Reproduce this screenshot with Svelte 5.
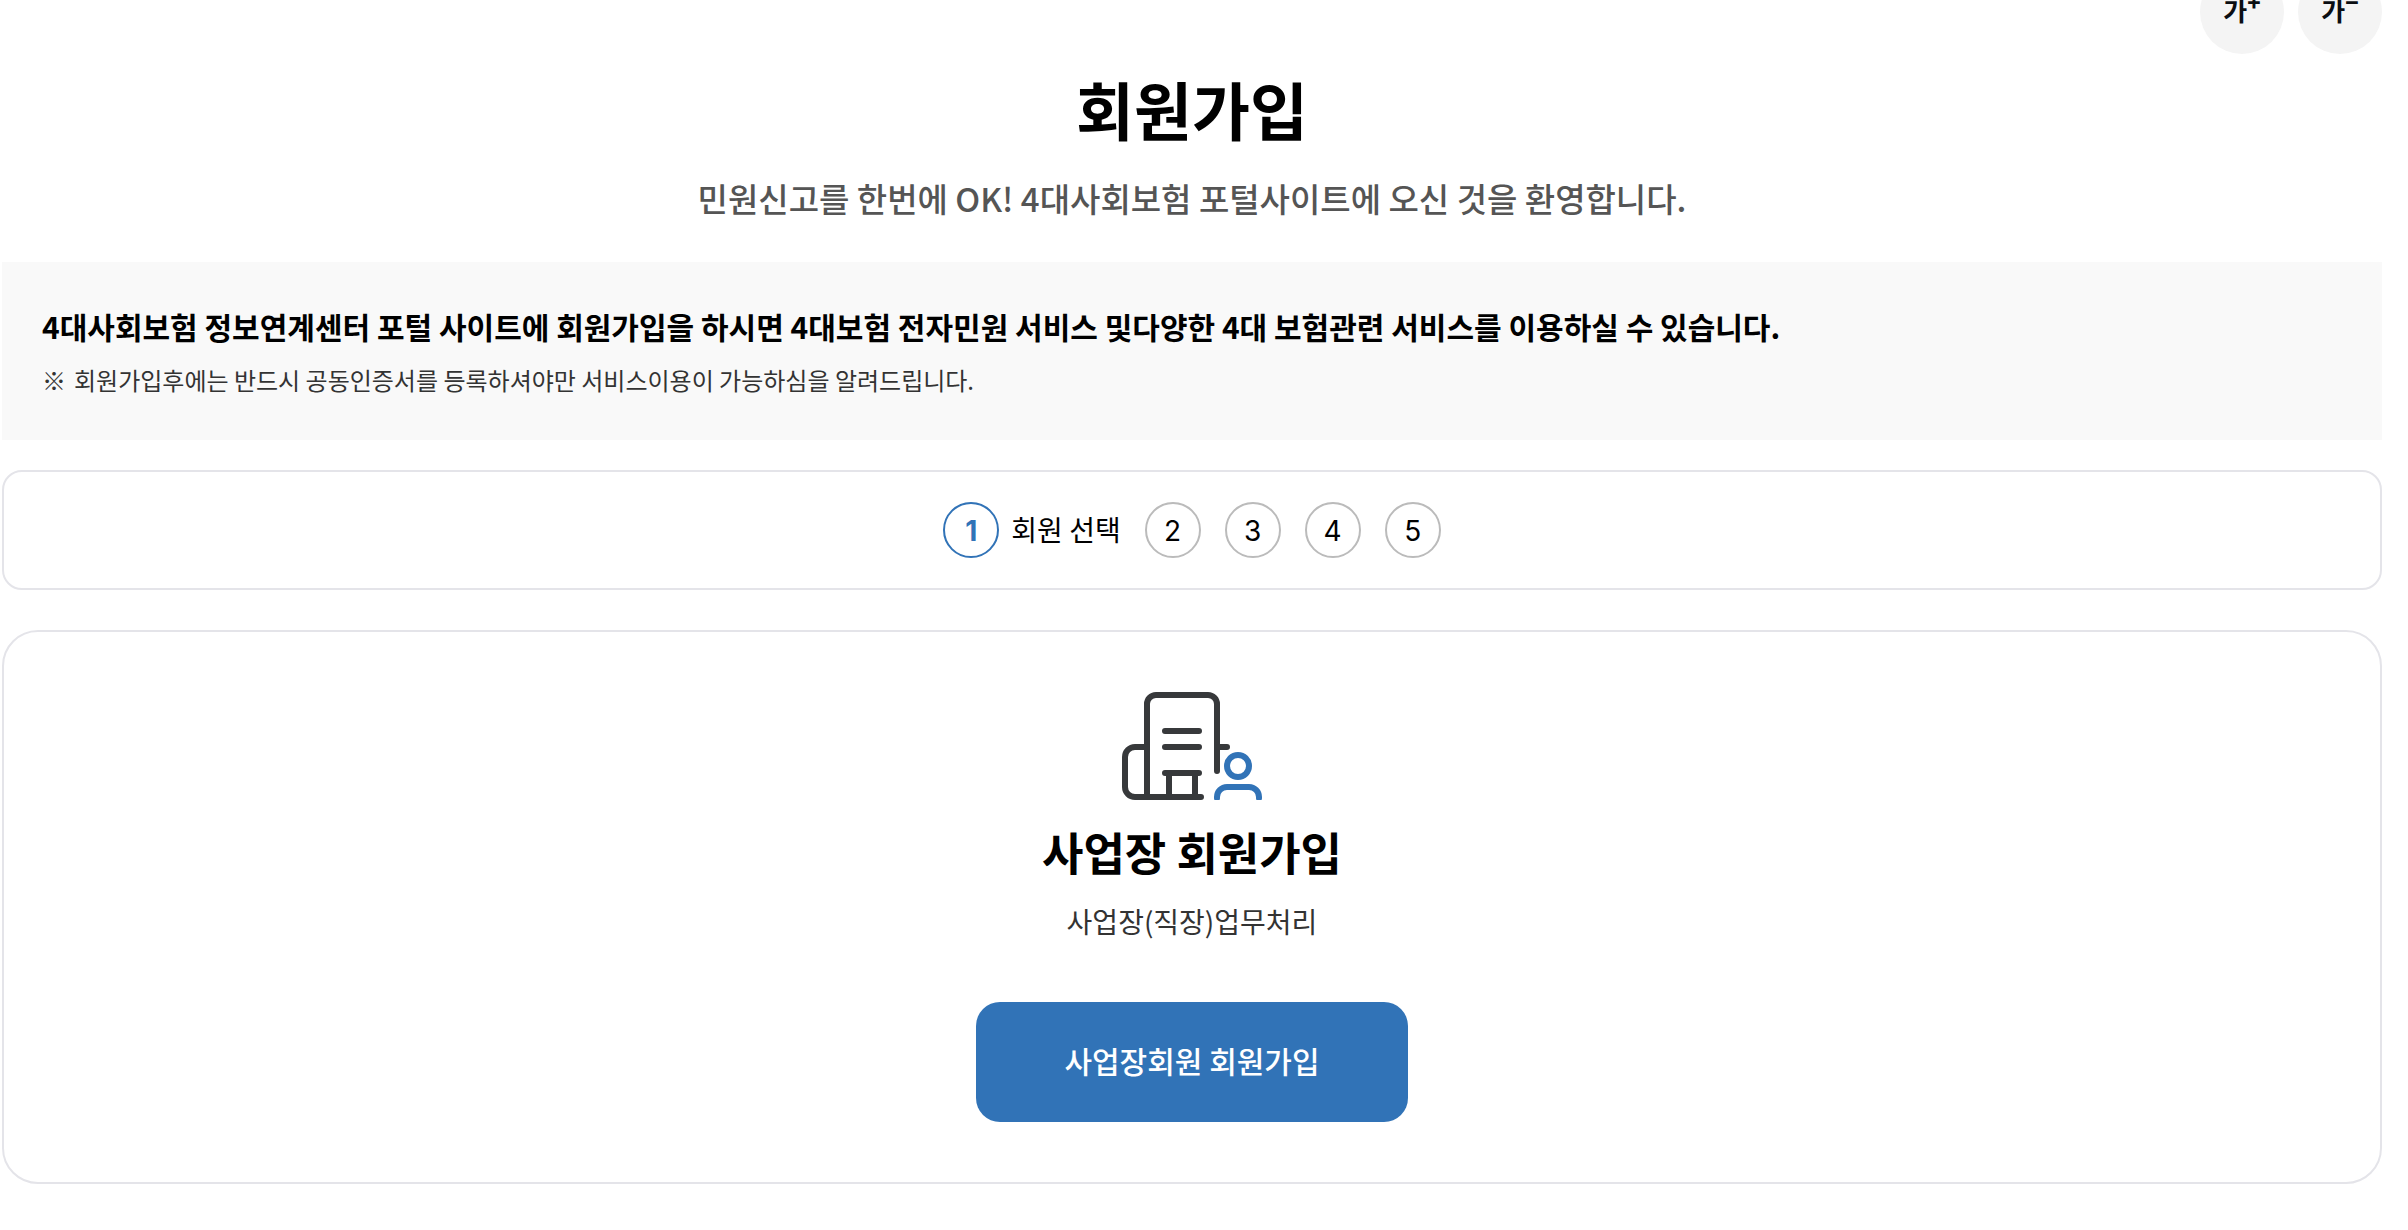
<script>
  const steps = [
    { number: 1, label: '회원 선택' },
    { number: 2 },
    { number: 3 },
    { number: 4 },
    { number: 5 }
  ];
</script>

<main class="page">
  <div class="tools">
    <button type="button" class="zoom" aria-label="글자 크게">가<sup>+</sup></button>
    <button type="button" class="zoom" aria-label="글자 작게">가<sup>−</sup></button>
  </div>

  <header class="heading">
    <h1>회원가입</h1>
    <p>민원신고를 한번에 OK! 4대사회보험 포털사이트에 오신 것을 환영합니다.</p>
  </header>

  <section class="notice">
    <strong>4대사회보험 정보연계센터 포털 사이트에 회원가입을 하시면 4대보험 전자민원 서비스 및다양한 4대 보험관련 서비스를 이용하실 수 있습니다.</strong>
    <p><span class="mark">※</span>회원가입후에는 반드시 공동인증서를 등록하셔야만 서비스이용이 가능하심을 알려드립니다.</p>
  </section>

  <ol class="steps">
    {#each steps as step}
      <li class:current={step.label}>
        <span class="number">{step.number}</span>
        {#if step.label}<span class="label">{step.label}</span>{/if}
      </li>
    {/each}
  </ol>

  <section class="card">
    <svg class="icon" viewBox="0 0 140 108" fill="none" stroke-width="6" stroke-linecap="round" aria-hidden="true">
      <g stroke="#37393b">
        <path d="M25 105V12a9 9 0 0 1 9-9h52a9 9 0 0 1 9 9v67" />
        <path d="M25 55H13a10 10 0 0 0-10 10v30a10 10 0 0 0 10 10h66" />
        <path d="M43 39h34M43 55h34M43 81h34M47 83v22M73 83v22M97 55h8" />
      </g>
      <g stroke="#3173b7">
        <circle cx="116" cy="74" r="11" />
        <path d="M95 106v-1a10 10 0 0 1 10-10h22a10 10 0 0 1 10 10v1" />
      </g>
    </svg>
    <h2>사업장 회원가입</h2>
    <p>사업장(직장)업무처리</p>
    <button type="button" class="join">사업장회원 회원가입</button>
  </section>
</main>

<style>
  :global(body) {
    margin: 0;
    background: #fff;
  }

  .page {
    padding: 0 26px 46px 2px;
    overflow: hidden;
    color: #000;
    font-family: 'Noto Sans CJK KR', sans-serif;
  }

  h1,
  h2,
  p,
  ol {
    margin: 0;
  }

  button {
    border: 0;
    font-family: inherit;
    cursor: pointer;
  }

  .tools {
    display: flex;
    justify-content: flex-end;
    gap: 14px;
    margin-top: -30px;
  }

  .zoom {
    width: 84px;
    height: 84px;
    padding: 0 0 4px;
    border-radius: 50%;
    background: #f4f4f4;
    color: #0b0e12;
    font-size: 26px;
    font-weight: 700;
    line-height: 80px;
  }

  .zoom sup {
    font-size: 22px;
    font-weight: 900;
    line-height: 0;
  }

  .heading {
    padding-top: 8px;
    text-align: center;
  }

  h1 {
    font-size: 63px;
    font-weight: 700;
    line-height: 92px;
  }

  .heading p {
    padding: 18px 0 38px;
    color: #555;
    font-size: 33px;
    font-weight: 500;
    line-height: 52px;
  }

  .notice {
    padding: 40px;
    background: #f9f9f9;
  }

  .notice strong {
    display: block;
    font-size: 30px;
    font-weight: 700;
    line-height: 48px;
  }

  .notice p {
    padding-top: 10px;
    color: #333;
    font-size: 24px;
    line-height: 40px;
  }

  .mark {
    margin-right: 8px;
  }

  .steps {
    display: flex;
    justify-content: center;
    gap: 24px;
    margin-top: 30px;
    padding: 30px;
    border: 2px solid #e4e4e9;
    border-radius: 20px;
    list-style: none;
  }

  .steps li {
    display: flex;
    align-items: center;
    gap: 12px;
  }

  .number {
    box-sizing: border-box;
    width: 56px;
    height: 56px;
    border: 2px solid #bbb;
    border-radius: 50%;
    font-family: Inter, 'Noto Sans CJK KR', sans-serif;
    font-size: 28px;
    line-height: 54px;
    text-align: center;
  }

  .current .number {
    border-color: #3173b7;
    color: #3173b7;
    font-weight: 700;
  }

  .label {
    padding-bottom: 2px;
    font-size: 28px;
    line-height: 40px;
  }

  .card {
    display: flex;
    flex-direction: column;
    align-items: center;
    margin-top: 40px;
    padding: 60px;
    border: 2px solid #e4e4e9;
    border-radius: 36px;
    text-align: center;
  }

  .icon {
    width: 140px;
    height: 108px;
  }

  h2 {
    padding-top: 18px;
    font-size: 45px;
    font-weight: 700;
    line-height: 68px;
  }

  .card p {
    padding-top: 14px;
    color: #333;
    font-size: 28px;
    line-height: 42px;
  }

  .join {
    width: 432px;
    height: 120px;
    margin-top: 60px;
    padding: 0 0 4px;
    border-radius: 24px;
    background: #3173b7;
    color: #fff;
    font-size: 30px;
    font-weight: 500;
  }
</style>
